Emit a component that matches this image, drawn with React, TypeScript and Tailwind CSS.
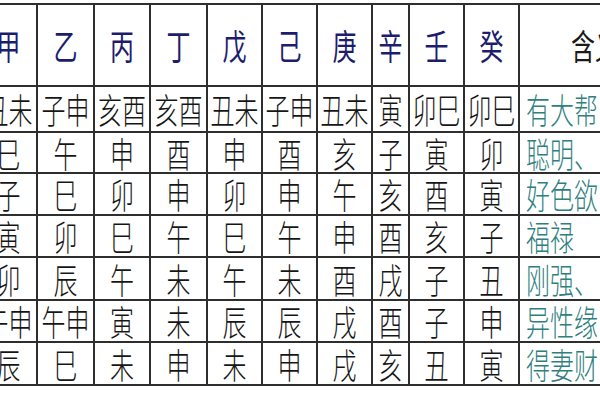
const headers = ["甲", "乙", "丙", "丁", "戊", "己", "庚", "辛", "壬", "癸"];

const rows: { cells: string[]; note: string }[] = [
  { cells: ["丑未", "子申", "亥酉", "亥酉", "丑未", "子申", "丑未", "寅", "卯巳", "卯巳"], note: "有大帮" },
  { cells: ["巳", "午", "申", "酉", "申", "酉", "亥", "子", "寅", "卯"], note: "聪明、" },
  { cells: ["子", "巳", "卯", "申", "卯", "申", "午", "亥", "酉", "寅"], note: "好色欲" },
  { cells: ["寅", "卯", "巳", "午", "巳", "午", "申", "酉", "亥", "子"], note: "福禄" },
  { cells: ["卯", "辰", "午", "未", "午", "未", "酉", "戌", "子", "丑"], note: "刚强、" },
  { cells: ["午申", "午申", "寅", "未", "辰", "辰", "戌", "酉", "子", "申"], note: "异性缘" },
  { cells: ["辰", "巳", "未", "申", "未", "申", "戌", "亥", "丑", "寅"], note: "得妻财" },
];

function Glyph({ text, className = "" }: { text: string; className?: string }) {
  return (
    <span className={`inline-block scale-y-[1.45] text-[24px] leading-none tracking-[0px] ${className}`}>
      {text}
    </span>
  );
}

export default function App() {
  return (
    <div
      className="h-[400px] w-[600px] overflow-hidden bg-white pt-[3px]"
      style={{ fontFamily: '"Noto Sans CJK SC", "Noto Sans", sans-serif' }}
    >
      <div className="ml-[-21px] grid w-max grid-cols-[55px_55px_54px_55px_53px_53px_53px_35px_53px_53px_150px] grid-rows-[80px_44px_39px_40px_40px_41px_40px_41px] gap-[2px] bg-[#2e2e2e] p-[2px]">
        {headers.map((h) => (
          <div key={h} className="flex items-center justify-center bg-white text-[#1d1d6e]">
            <Glyph text={h} />
          </div>
        ))}
        <div className="flex items-center justify-center bg-white text-[#1a1a1a]">
          <Glyph text="含义" />
        </div>

        {rows.map((r, i) => (
          <>
            {r.cells.map((c, j) => (
              <div
                key={`${i}-${j}`}
                className="flex items-center justify-center overflow-hidden whitespace-nowrap bg-white text-[#161616]"
              >
                <Glyph text={c} className="font-light" />
              </div>
            ))}
            <div
              key={`${i}-note`}
              className="flex items-center overflow-hidden whitespace-nowrap bg-white pl-[6px] text-[#2f7f80]"
            >
              <Glyph text={r.note} className="font-light" />
            </div>
          </>
        ))}
      </div>
    </div>
  );
}
